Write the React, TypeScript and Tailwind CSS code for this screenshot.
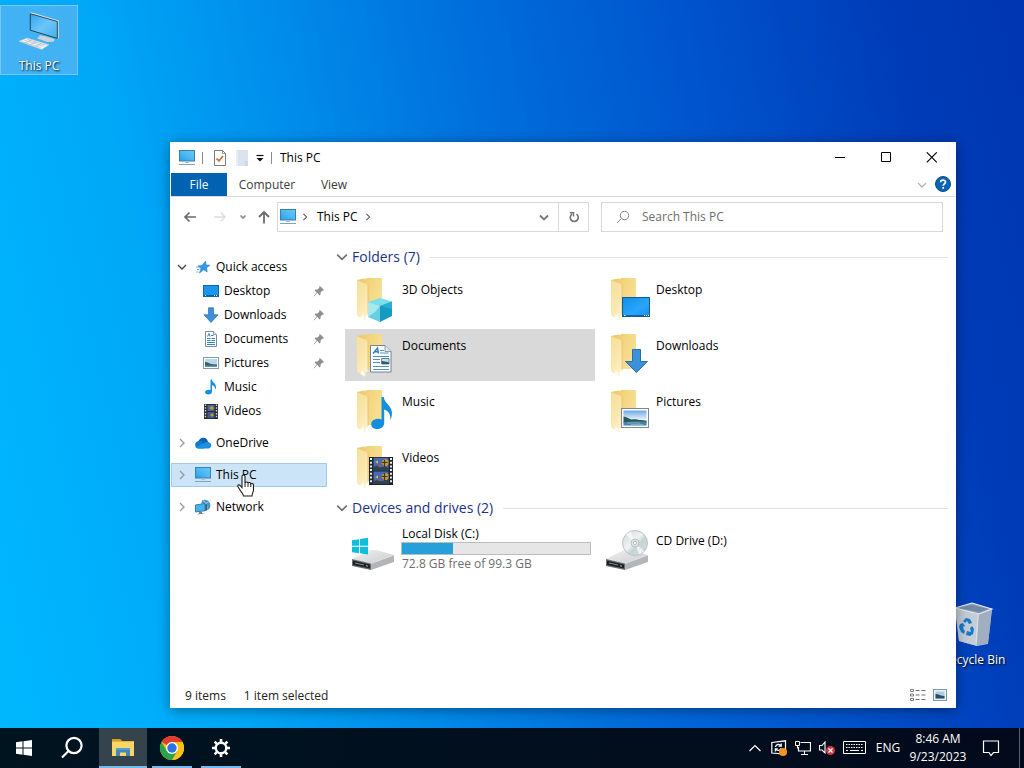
import React from "react";

type IconProps = { className?: string };

/* ---------- small icons ---------- */

function PcIcon({ className = "w-[18px] h-[18px]" }: IconProps) {
  return (
    <svg viewBox="0 0 18 18" className={className} aria-hidden="true">
      <defs>
        <linearGradient id="pcg" x1="0" y1="1" x2="1" y2="0">
          <stop offset="0" stopColor="#2a9de4" />
          <stop offset="0.5" stopColor="#4db8f2" />
          <stop offset="1" stopColor="#6cc9f8" />
        </linearGradient>
      </defs>
      <rect x="1.5" y="1.5" width="15" height="10.5" fill="url(#pcg)" stroke="#3c7fae" />
      <path d="M7 12.5h4V14H7z" fill="#a8c4d6" />
      <path d="M1 15.500h16" stroke="#7fa3b8" />
    </svg>
  );
}

function Chevron({ dir, className = "w-[10px] h-[10px]" }: IconProps & { dir: "down" | "right" | "up" }) {
  const d = dir === "down" ? "M1 3l4 4 4-4" : dir === "up" ? "M1 7l4-4 4 4" : "M3 1l4 4-4 4";
  return (
    <svg viewBox="0 0 10 10" className={className} fill="none" stroke="currentColor" aria-hidden="true">
      <path d={d} strokeWidth="1.3" />
    </svg>
  );
}

function PinIcon() {
  return (
    <svg viewBox="0 0 12 12" className="h-3 w-3" aria-hidden="true">
      <path d="M7 1l4 4-.8.8-.8-.2L7.6 7.400l-.1 2.100-.9.900L4.300 8.100.900 11.400l-.3-.3L3.900 7.700 1.600 5.400l.9-.9 2.100-.1L6.400 2.600 6.200 1.800z" fill="#8c9094" />
    </svg>
  );
}

function StarIcon() {
  return (
    <svg viewBox="0 0 16 16" className="h-4 w-4" aria-hidden="true">
      <path d="M10.500 2l.6 4 3.900.3-3.400 2.400.6 4.300-3.500-2.300L4.500 14l1.500-4.600L3 6.900l4-.4z" fill="#2f9be6" stroke="#2b82c4" strokeWidth=".6" />
      <path d="M1 8h3M2 10.500h2.500M1.500 13h2" stroke="#4aa7e4" strokeWidth=".9" />
    </svg>
  );
}

function DesktopSmall() {
  return (
    <svg viewBox="0 0 16 16" className="h-4 w-4" aria-hidden="true">
      <rect x=".5" y="2.500" width="15" height="11" fill="#1a96ee" stroke="#1568a8" />
      <path d="M1 12.500h14" stroke="#0e62a8" />
      <path d="M2 12.500h1M11 12.500h1M13 12.500h1" stroke="#d9efff" />
    </svg>
  );
}

function DownloadSmall() {
  return (
    <svg viewBox="0 0 16 16" className="h-4 w-4" aria-hidden="true">
      <path d="M5.500.8h5v7H15L8 15.500 1 7.800h4.500z" fill="#3c8fdb" stroke="#2b6dab" strokeWidth=".7" />
    </svg>
  );
}

function DocumentSmall() {
  return (
    <svg viewBox="0 0 16 16" className="h-4 w-4" aria-hidden="true">
      <path d="M2.500.5h8l3 3v12h-11z" fill="#fff" stroke="#7e8a94" />
      <path d="M10.500.5v3h3" fill="#e5eaee" stroke="#7e8a94" strokeWidth=".8" />
      <path d="M4.500 5.500L6 2.500l1 3M8 4.500h2.500M4 7.500h3.500M8.500 7.500H12M4 9.500h3.500M8.500 9.500H12M4 11.500h8M4 13.500h8" fill="none" stroke="#2f86c6" />
    </svg>
  );
}

function PictureSmall() {
  return (
    <svg viewBox="0 0 16 16" className="h-4 w-4" aria-hidden="true">
      <rect x=".5" y="2.500" width="15" height="11" fill="#fff" stroke="#8a99a5" />
      <rect x="2" y="4" width="12" height="8" fill="#b5d8ec" />
      <path d="M2 7c3 0 4 1.500 6 2 2 .2 4 .3 6 .5V12H2z" fill="#3c5d70" />
      <path d="M2 10.500h12V12H2z" fill="#5d93b5" />
    </svg>
  );
}

function MusicSmall() {
  return (
    <svg viewBox="0 0 16 16" className="h-4 w-4" aria-hidden="true">
      <path d="M7.500.5h1.400c.4 3 4.100 3.700 4.100 7.500 0 1-.3 2-.8 2.800.2-3-1.300-4-3.200-4.800v6.500c0 1.800-1.500 3-3.500 3S2 14.600 2 13.300s1.500-2.500 3.500-2.500c.8 0 1.500.1 2 .4z" fill="#168fdf" />
    </svg>
  );
}

function VideoSmall() {
  return (
    <svg viewBox="0 0 16 16" className="h-4 w-4" aria-hidden="true">
      <rect x="1" y="1" width="14" height="15" fill="#262a31" />
      <path d="M2.500 1.500v14M13.500 1.500v14" stroke="#d5dade" strokeWidth="1.400" strokeDasharray="1.500 1.300" />
      <path d="M4.500 2h7v6h-7z" fill="#4d63a6" />
      <path d="M4.500 9h7v6h-7z" fill="#40578f" />
      <path d="M6 5l3-2 2 2-2 2zM7 12l2-2 2 2-2 2z" fill="#c09b2b" />
    </svg>
  );
}

function OneDriveIcon() {
  return (
    <svg viewBox="0 0 18 16" className="h-4 w-[18px]" aria-hidden="true">
      <path d="M4.500 6A5 5 0 0 1 13 4.500l2 4L8 13H4.500z" fill="#0f62b4" />
      <path d="M4.500 6a4 4 0 0 1 4 1L13 10l-3 3.500H4.300A3.800 3.800 0 0 1 4.500 6z" fill="#1178cc" />
      <path d="M12.500 7c2.800-.5 4.800 1.100 4.800 3.300 0 1.900-1.300 3.200-3.200 3.200H4.200C2.800 13.500 2 13 1.500 12.300z" fill="#1b8fe0" />
    </svg>
  );
}

function NetworkIcon() {
  return (
    <svg viewBox="0 0 18 16" className="h-4 w-[18px]" aria-hidden="true">
      <path d="M8 1.500c3-1.500 6-.5 7.500 2s1 5.500-1 7L11 12 7 6z" fill="#4c93bd" />
      <path d="M9 1.500c2.500 1 4 4 4.200 8M8 5c3 0 5-1 7-2.500" stroke="#a4d9f2" strokeWidth=".8" fill="none" />
      <path d="M1.500 6l9.500-1.500v7.200L1.500 13z" fill="#45b4f0" stroke="#397da7" />
      <path d="M5 13l3-.4v1.400l2 .8-7 .7 2-1.200z" fill="#72899a" />
      <path d="M11.500 4.500l1.500 1v5.700l-1.500.6z" fill="#28618c" />
    </svg>
  );
}

/* ---------- folder icons ---------- */

function FolderIcon({ children }: { children: React.ReactNode }) {
  return (
    <svg viewBox="0 0 48 48" className="h-12 w-12 shrink-0" aria-hidden="true">
      <defs>
        <linearGradient id="fback" x1="0" y1="0" x2="1" y2="0.4">
          <stop offset="0" stopColor="#e9c469" />
          <stop offset="0.5" stopColor="#f3d57f" />
          <stop offset="1" stopColor="#f8df94" />
        </linearGradient>
        <linearGradient id="ffront" x1="0" y1="0" x2="0.4" y2="1">
          <stop offset="0" stopColor="#f7df98" />
          <stop offset="0.7" stopColor="#fae8ae" />
          <stop offset="1" stopColor="#fcf0cd" />
        </linearGradient>
      </defs>
      <path d="M6 5l7-1.500 2 .5 1-1h15v35H14L6 40z" fill="url(#fback)" />
      <path d="M6 5l11 5v30l-2.500 1.500V46L6 40.500z" fill="url(#ffront)" />
      <path d="M17 10v29" stroke="#e4c26a" strokeWidth=".8" />
      <path d="M11 40l1.500 1 .5 4.300-3.500-2.500z" fill="#fff" />
      {children}
    </svg>
  );
}

const Cube = (
  <g>
    <path d="M17 27l12-4 12 3.500-12 4.500z" fill="#79dfee" />
    <path d="M17 27l12 4v16l-12-5z" fill="#67cfe3" />
    <path d="M17 27l12 4-5 6-7 5z" fill="#a9e9ec" />
    <path d="M29 31l12-4.500V41l-12 6z" fill="#159bc0" />
    <path d="M29 31l12-4.500V34z" fill="#27afd0" />
  </g>
);

const DesktopBadge = (
  <g>
    <defs>
      <linearGradient id="dskb" x1="0" y1="0" x2="1" y2="1">
        <stop offset="0" stopColor="#0f8fe9" />
        <stop offset="0.6" stopColor="#2aa5fa" />
        <stop offset="1" stopColor="#1490ed" />
      </linearGradient>
    </defs>
    <rect x="17.500" y="22.500" width="27" height="19" fill="url(#dskb)" stroke="#165b91" />
    <path d="M18 40.500h26" stroke="#0d66b5" />
    <path d="M19 40.500h1.500M39 40.500h1M41 40.500h1M43 40.500h1" stroke="#e5f5ff" />
  </g>
);

const DocumentBadge = (
  <g>
    <path d="M19.500 14.500h14.500l6 6v20.500H19.500z" fill="#fff" stroke="#77838e" />
    <path d="M34 14.500v6h6" fill="#e3e8ec" stroke="#77838e" strokeWidth=".8" />
    <path d="M22 22.500l4.500-5.500 1 5.500M23.500 20.800h4" stroke="#2a7dbe" strokeWidth="1.400" fill="none" />
    <path d="M29 19.500h4M29 22h8.500M22 25.500h16M22 28.500h7M22 31.500h7M22 35.500h16M22 38.500h16" stroke="#4d8fc3" />
    <path d="M30.500 27.500H38V33h-7.500z" fill="#c4dfef" stroke="#49677a" strokeWidth=".8" />
    <path d="M31 30l3 .5 4 1v1.500h-7z" fill="#34566a" />
  </g>
);

const DownloadBadge = (
  <path d="M27.500 18.500h8v12h7L31.500 41.500 20.500 30.500h7z" fill="#3b91dc" stroke="#2d6da6" />
);

const MusicBadge = (
  <path d="M30.500 10h2.200c.3 6 8.300 8.500 8.300 16 0 2.800-.6 5-1.800 7.300.8-6.300-1.700-9-6-10.800v13.200c0 3.800-2.900 6.300-7 6.300-3.500 0-6-1.900-6-4.800 0-3.200 3-5.500 7-5.500 1.300 0 2.400.3 3.300.8z" fill="#158fdd" />
);

const PictureBadge = (
  <g>
    <defs>
      <linearGradient id="sky" x1="0" y1="0" x2="0" y2="1">
        <stop offset="0" stopColor="#6fa8e4" />
        <stop offset="0.6" stopColor="#e4f2f8" />
      </linearGradient>
    </defs>
    <rect x="16.500" y="21.500" width="27" height="19" fill="#fff" stroke="#7b8791" />
    <rect x="18.500" y="23.500" width="23" height="15" fill="url(#sky)" />
    <path d="M18.500 29.500c3 .5 5 2 8 3 4-.5 6 .2 8 .5 3 .2 5 .2 7 .7V36h-23z" fill="#2a5a56" />
    <path d="M18.500 35c6-.5 15-1 23-.2v3.700h-23z" fill="#4585ab" />
    <path d="M22 36h13M26 37.500h12" stroke="#90bfce" strokeWidth=".7" />
  </g>
);

const VideoBadge = (
  <g>
    <rect x="18" y="14" width="24" height="28" fill="#20242b" />
    <path d="M20 15v26M40 15v26" stroke="#e9edef" strokeWidth="2" strokeDasharray="2 1.700" />
    <path d="M22.500 14.800h15v12.500h-15zM22.500 28.500h15V41h-15z" fill="#4569b8" />
    <path d="M22.500 24l4-1.500 3 2 5-1 3 1.500v2.300h-15zM22.500 38l4-1 4 1.500 7-2V41h-15z" fill="#2d4350" />
    <path d="M30 20l1.500-2.500 3-1.500 3 1.500v4l-2 1.500h-2.500zM30 34l1.500-2.500 3-1.500 3 1.500v4l-2 1.500h-2.500z" fill="#c99e28" />
    <path d="M33.500 17v7M33.500 30v8M30.500 19.500h6M30.500 33.500h6" stroke="#43331f" strokeWidth="1.200" />
    <path d="M24 19l3-1.500v3zM24 34l3-1.500v3z" fill="#e5bc38" />
    <path d="M27 23h3M27 37h3" stroke="#c74b35" strokeWidth="1.500" />
  </g>
);

function DriveBody() {
  return (
    <g>
      <defs>
        <linearGradient id="dtop" x1="0" y1="0" x2="1" y2="1">
          <stop offset="0" stopColor="#efefef" />
          <stop offset="1" stopColor="#cbcdce" />
        </linearGradient>
      </defs>
      <path d="M1 33l18-9h6l18 5-22 9z" fill="url(#dtop)" />
      <path d="M1 33l19 4.500v6.500L1 40z" fill="#6b6f72" />
      <path d="M2 34.500l17 4v4l-17-3.500z" fill="#1e2123" />
      <path d="M20 37.500L43 29v7l-23 8z" fill="#b3b6b8" />
      <path d="M20 37.500L43 29" stroke="#e4e6e7" strokeWidth=".8" />
      <path d="M4 37l9 2" stroke="#858b8f" />
      <path d="M15 39.700l2 .5" stroke="#a5c7a5" />
    </g>
  );
}

function LocalDiskIcon() {
  return (
    <svg viewBox="0 0 48 48" className="h-12 w-12 shrink-0" aria-hidden="true">
      <DriveBody />
      <path d="M1 14.200l7-1v6.500H1zM9 13l8-1.200v7.900H9zM1 20.700h7v6.500l-7-1zM9 20.700h8v7.800l-8-1.200z" fill="#10bddd" />
    </svg>
  );
}

function CdDriveIcon() {
  return (
    <svg viewBox="0 0 48 48" className="h-12 w-12 shrink-0" aria-hidden="true">
      <defs>
        <linearGradient id="disc" x1="0" y1="0" x2="1" y2="1">
          <stop offset="0" stopColor="#d2d6d7" />
          <stop offset="0.45" stopColor="#f0f3f3" />
          <stop offset="0.6" stopColor="#c4d4d4" />
          <stop offset="1" stopColor="#dadddd" />
        </linearGradient>
      </defs>
      <DriveBody />
      <circle cx="30" cy="17" r="12.500" fill="url(#disc)" stroke="#bcc2c4" />
      <path d="M30 17L21 8.500a12 12 0 0 1 5-3zM30 17l9 8a12 12 0 0 1-5 3.500z" fill="#fff" opacity=".65" />
      <circle cx="30" cy="17" r="4" fill="#dfe4e5" stroke="#b4babc" strokeWidth=".8" />
      <circle cx="30" cy="17" r="1.700" fill="#fff" stroke="#a7afb3" strokeWidth=".7" />
    </svg>
  );
}

/* ---------- desktop icons ---------- */

function DesktopPcIcon() {
  return (
    <svg viewBox="0 0 48 48" className="h-12 w-12" aria-hidden="true">
      <defs>
        <linearGradient id="scr" x1="0" y1="0" x2="1" y2="1">
          <stop offset="0" stopColor="#2fa5ee" />
          <stop offset="0.5" stopColor="#6cc6fa" />
          <stop offset="1" stopColor="#41aef0" />
        </linearGradient>
      </defs>
      <path d="M14 3.500l1.500-1L45.500 11.500V31l-1.500.5z" fill="#dde5e9" />
      <path d="M14.500 4l29.500 8.500v18.500L14.500 22z" fill="url(#scr)" stroke="#24384a" strokeWidth="1" />
      <path d="M25 27.500l7 1.500 9 3-1 2.500-7 .5-11-4z" fill="#c9d3d8" />
      <path d="M2 34l9-3.500L35 38l-8 5z" fill="#f2f5f6" stroke="#b6c2c9" strokeWidth=".6" />
      <path d="M5 34.500l21 6.500M8 33l21 6.500M11 32l21 6.500M9 36l7-3.500M14 38l7-3.500M20 40l7-3.500" stroke="#a9b5bb" strokeWidth=".7" />
    </svg>
  );
}

function RecycleBinIcon() {
  return (
    <svg viewBox="0 0 48 48" className="h-12 w-12" aria-hidden="true">
      <path d="M5 9l17-5 20 6-4 35-11 2L9 42z" fill="#b8c3d0" opacity=".9" />
      <path d="M5 9l24 6-2 32L9 42z" fill="#c3ccd7" />
      <path d="M29 15l13-5-4 34-11 3z" fill="#a0aebf" />
      <path d="M5 9l17-5 20 6-13 5z" fill="#8d9db2" stroke="#e4edf5" strokeWidth="1.100" />
      <path d="M9 9l13-3 16 4-9 3z" fill="#7189a6" />
      <path d="M28 16l-2 28" stroke="#e8edf2" strokeWidth=".7" />
      <path d="M13 22l3-3 4 1 2 4-3 1-2-3-2 2zM10 25l3-1 2 3-2 1 1 3 1 1-1 3-3-2-2-5zM17 32l4 1-1-4 2-2 2 3-1 5-3 2-4-1z" fill="#137ccb" />
    </svg>
  );
}

function HandCursor() {
  return (
    <svg viewBox="0 0 18 24" className="pointer-events-none absolute left-[66px] top-[11px] z-10 h-6 w-[18px]" aria-hidden="true">
      <path d="M5 2.500C5 .5 8 .5 8 2.500V9c.5-1.500 3-1.300 3 .3.700-1.300 2.800-1 2.800.7.900-1 2.700-.5 2.700 1.200V16c0 2-1.500 3-1.500 6H6.500c0-2-2-3.500-3.500-6l-2-3.300c-.8-1.500 1-2.400 2-1.400L5 13.500z" fill="#fff" stroke="#1a1a1a" strokeWidth="1.100" />
      <path d="M8 9v4M11 9.500V13M13.800 10.500V13" stroke="#1a1a1a" />
    </svg>
  );
}

/* ---------- data ---------- */

const quickAccess = [
  { label: "Desktop", icon: <DesktopSmall />, pinned: true },
  { label: "Downloads", icon: <DownloadSmall />, pinned: true },
  { label: "Documents", icon: <DocumentSmall />, pinned: true },
  { label: "Pictures", icon: <PictureSmall />, pinned: true },
  { label: "Music", icon: <MusicSmall />, pinned: false },
  { label: "Videos", icon: <VideoSmall />, pinned: false },
];

const folders = [
  { label: "3D Objects", badge: Cube },
  { label: "Desktop", badge: DesktopBadge },
  { label: "Documents", badge: DocumentBadge, selected: true },
  { label: "Downloads", badge: DownloadBadge },
  { label: "Music", badge: MusicBadge },
  { label: "Pictures", badge: PictureBadge },
  { label: "Videos", badge: VideoBadge },
];

/* ---------- explorer window ---------- */

function TitleBar() {
  return (
    <header className="flex h-[30px] items-center pl-[7px]">
      <PcIcon />
      <span className="ml-1.5 h-3 w-px bg-[#8a8a8a]" />
      <button aria-label="Properties" className="ml-2.5">
        <svg viewBox="0 0 14 16" className="h-4 w-3.5">
          <path d="M1.500.500h8l3 3v12h-11z" fill="#fff" stroke="#7b7b7b" />
          <path d="M9.500.5v3h3" fill="none" stroke="#7b7b7b" strokeWidth=".8" />
          <path d="M3.500 8.500l2.500 2.500 4-5" fill="none" stroke="#c8764c" strokeWidth="1.800" />
        </svg>
      </button>
      <button aria-label="New folder" className="ml-2">
        <svg viewBox="0 0 14 16" className="h-4 w-3.5">
          <path d="M1 0h12v16H1z" fill="#dbe3f1" />
          <path d="M1 0h2v16H1z" fill="#e8edf6" />
          <path d="M10 11h3v5h-3z" fill="#ccd7ea" />
        </svg>
      </button>
      <button aria-label="Customize toolbar" className="ml-1.5">
        <svg viewBox="0 0 10 10" className="h-2.5 w-2.5">
          <path d="M1.500 2.500h7" stroke="#111" strokeWidth="1.200" />
          <path d="M1.500 5h7L5 8.500z" fill="#111" />
        </svg>
      </button>
      <span className="ml-1.5 h-3 w-px bg-[#8a8a8a]" />
      <h1 className="ml-2 flex-1">This PC</h1>
      <button aria-label="Minimize" className="flex h-full w-[46px] items-center justify-center">
        <svg viewBox="0 0 12 12" className="h-3 w-3"><path d="M1 5.500h10" stroke="#000" /></svg>
      </button>
      <button aria-label="Maximize" className="flex h-full w-[46px] items-center justify-center">
        <svg viewBox="0 0 12 12" className="h-3 w-3"><path d="M1.500.500h9v9h-9z" fill="none" stroke="#000" /></svg>
      </button>
      <button aria-label="Close" className="flex h-full w-[46px] items-center justify-center">
        <svg viewBox="0 0 12 12" className="h-3 w-3"><path d="M.8.300l10 10M10.800.300l-10 10" stroke="#000" strokeWidth="1.100" /></svg>
      </button>
    </header>
  );
}

function RibbonTabs() {
  return (
    <nav className="flex h-6 items-stretch border-b border-[#dadbdc] text-[#3b3b3b]">
      <button className="w-14 bg-[#0063b1] text-white">File</button>
      <button className="w-20">Computer</button>
      <button className="w-[54px]">View</button>
      <button aria-label="Expand the ribbon" className="ml-auto text-[#b0b4b8]"><Chevron dir="down" /></button>
      <button aria-label="Help" className="ml-2 mr-1 flex items-start pt-[3px]">
        <svg viewBox="0 0 16 16" className="h-4 w-4">
          <circle cx="8" cy="8" r="7.500" fill="#0c64b4" stroke="#0a4e91" />
          <path d="M5.600 6.200C5.600 3.500 10.500 3.500 10.500 6c0 1.700-2.300 1.900-2.300 3.700M8.200 11v1.700" stroke="#fff" strokeWidth="1.700" fill="none" />
        </svg>
      </button>
    </nav>
  );
}

function AddressBar() {
  return (
    <div className="flex h-10 items-center pr-3 text-[#5c5c5c]">
      <button aria-label="Back" className="flex w-[38px] justify-center">
        <svg viewBox="0 0 14 14" className="h-3.5 w-3.5" fill="none" stroke="#6a6a6a" strokeWidth="1.700"><path d="M13 7H2M6.500 2.500L2 7l4.500 4.500" /></svg>
      </button>
      <button aria-label="Forward" className="flex w-[22px] justify-center">
        <svg viewBox="0 0 14 14" className="h-3.5 w-3.5" fill="none" stroke="#dcdcdc" strokeWidth="1.400"><path d="M1 7h11M7.500 2.500L12 7l-4.500 4.500" /></svg>
      </button>
      <button aria-label="Recent locations" className="flex w-6 justify-center">
        <svg viewBox="0 0 8 8" className="h-2 w-2" fill="none" stroke="#8a8a8a" strokeWidth="1.700"><path d="M1.500 2.500L4 5l2.500-2.500" /></svg>
      </button>
      <button aria-label="Up" className="mr-1 flex w-[18px] justify-center">
        <svg viewBox="0 0 14 14" className="h-3.5 w-3.5" fill="none" stroke="#6a6a6a" strokeWidth="1.800"><path d="M7 13.500V2M2 7l5-5 5 5" /></svg>
      </button>
      <div className="flex h-[30px] flex-1 items-center border border-[#d9d9d9] pl-px">
        <PcIcon />
        <span className="ml-1 text-[#555]"><Chevron dir="right" className="h-2 w-2" /></span>
        <button className="ml-2 text-black">This PC</button>
        <span className="ml-1.5 text-[#555]"><Chevron dir="right" className="h-2 w-2" /></span>
        <button aria-label="Previous locations" className="ml-auto mr-[9px]">
          <svg viewBox="0 0 10 10" className="h-2.5 w-2.5" fill="none" stroke="#777" strokeWidth="1.800"><path d="M1 3.500l4 4 4-4" /></svg>
        </button>
        <button aria-label="Refresh" className="flex h-full w-[30px] items-center justify-center border-l border-[#d9d9d9]">
          <svg viewBox="0 0 12 12" className="h-3 w-3" fill="none" stroke="#707070" strokeWidth="1.600">
            <path d="M8.500 3.200A4 4 0 1 1 4 3.200" />
            <path d="M1.800 1.800h3.700v3.700" strokeWidth="1.400" />
          </svg>
        </button>
      </div>
      <label className="ml-3 flex h-[30px] w-[342px] items-center border border-[#d9d9d9] pl-3.5">
        <svg viewBox="0 0 14 14" className="h-3.5 w-3.5" fill="none" stroke="#888" strokeWidth="1"><circle cx="8.500" cy="5.500" r="4.200" /><path d="M5.500 8.500L1 13" /></svg>
        <input aria-label="Search This PC" placeholder="Search This PC" className="ml-3 min-w-0 flex-1 bg-transparent outline-none placeholder:text-[#6d6d6d]" />
      </label>
    </div>
  );
}

function RootRow({ label, icon, open, selected, children }: { label: string; icon: React.ReactNode; open?: boolean; selected?: boolean; children?: React.ReactNode }) {
  return (
    <div className={selected ? "relative flex h-6 items-center bg-[#cce4f7] outline outline-1 -outline-offset-1 outline-[#a5cbe8]" : "relative flex h-6 items-center"}>
      <button aria-label={"Toggle " + label} className={open ? "ml-1.5 text-[#404040]" : "ml-1.5 text-[#999]"}>
        <Chevron dir={open ? "down" : "right"} />
      </button>
      <button className="ml-[7px] flex items-center gap-1">
        <span className="flex w-[18px] justify-center">{icon}</span>
        {label}
      </button>
      {children}
    </div>
  );
}

function Sidebar() {
  return (
    <aside className="flex w-[156px] shrink-0 flex-col gap-2 pt-[18px]">
      <div>
        <RootRow label="Quick access" icon={<StarIcon />} open />
        <ul>
          {quickAccess.map((item) => (
            <li key={item.label} className="flex h-6 items-center pl-8 pr-0.5">
              <button className="flex flex-1 items-center gap-[5px]">
                {item.icon}
                {item.label}
              </button>
              {item.pinned && <PinIcon />}
            </li>
          ))}
        </ul>
      </div>
      <RootRow label="OneDrive" icon={<OneDriveIcon />} />
      <RootRow label="This PC" icon={<PcIcon />} selected>
        <HandCursor />
      </RootRow>
      <RootRow label="Network" icon={<NetworkIcon />} />
    </aside>
  );
}

function GroupHeading({ label }: { label: string }) {
  return (
    <h2 className="mb-1 flex h-6 items-center text-[14px] leading-6 text-[#1e3287]">
      <span className="mr-1 text-[#6d6d6d]"><Chevron dir="down" className="h-3 w-3" /></span>
      {label}
      <span className="ml-2.5 mt-px h-px flex-1 bg-[#e2e2e2]" />
    </h2>
  );
}

function Content() {
  return (
    <main className="min-w-0 flex-1 pl-[9px] pr-[7px] pt-2">
      <section>
        <GroupHeading label="Folders (7)" />
        <ul className="ml-[9px] grid grid-cols-[repeat(auto-fill,250px)] gap-1">
          {folders.map((f) => (
            <li key={f.label}>
              <button className={f.selected ? "flex h-[52px] w-full items-start gap-[3px] bg-[#d9d9d9] pl-1.5 pt-0.5" : "flex h-[52px] w-full items-start gap-[3px] pl-1.5 pt-0.5"}>
                <FolderIcon>{f.badge}</FolderIcon>
                <span className="mt-[7px]">{f.label}</span>
              </button>
            </li>
          ))}
        </ul>
      </section>
      <section className="mt-[3px]">
        <GroupHeading label="Devices and drives (2)" />
        <ul className="ml-[9px] grid grid-cols-[repeat(auto-fill,250px)] gap-1">
          <li>
            <button className="flex h-[52px] w-full items-start gap-0.5 pl-1.5 pr-1 pt-0.5 text-left">
              <LocalDiskIcon />
              <span className="flex-1">
                <span className="block pl-px">Local Disk (C:)</span>
                <span className="mb-px block h-[13px] border border-[#bcbcbc] bg-[#e6e6e6]">
                  <span className="block h-full w-[27%] bg-[#26a0da]" />
                </span>
                <span className="block pl-px text-[#6d6d6d]">72.8 GB free of 99.3 GB</span>
              </span>
            </button>
          </li>
          <li>
            <button className="flex h-[52px] w-full items-start gap-[3px] pl-1.5 pt-0.5">
              <CdDriveIcon />
              <span className="mt-[7px]">CD Drive (D:)</span>
            </button>
          </li>
        </ul>
      </section>
    </main>
  );
}

function StatusBar() {
  return (
    <footer className="flex h-6 items-center gap-[18px] pl-3.5 pr-2 text-[#222]">
      <span className="pt-0.5">9 items</span>
      <span className="pt-0.5">1 item selected</span>
      <span className="ml-auto flex items-center gap-[7px]">
        <button aria-label="Details view">
          <svg viewBox="0 0 16 14" className="h-3.5 w-4" fill="none" stroke="#707070">
            <path d="M.5 1.500h3v2h-3zM.5 6h3v2h-3zM.5 10.500h3v2h-3z" strokeWidth=".9" />
            <path d="M5.500 2.500h4M11.500 2.500h4M5.500 7h4M11.500 7h4M5.500 11.500h4M11.500 11.500h4" />
          </svg>
        </button>
        <button aria-label="Large icons view">
          <svg viewBox="0 0 14 12" className="h-3 w-3.5">
            <rect x=".5" y=".5" width="13" height="11" fill="#e6f3fb" stroke="#7d96a8" />
            <rect x="2.500" y="2.500" width="9" height="7" fill="#a9cde3" />
            <path d="M2.500 5c3 0 5 2 9 2v2.500h-9z" fill="#2d4d60" />
          </svg>
        </button>
      </span>
    </footer>
  );
}

/* ---------- taskbar ---------- */

function Taskbar() {
  return (
    <footer className="flex h-10 items-center bg-linear-to-r from-[#001420] to-[#020a1c] text-white">
      <button aria-label="Start" className="flex h-full w-12 items-center justify-center">
        <svg viewBox="0 0 16 16" className="h-4 w-4" fill="#fff"><path d="M0 2.200l6.500-.9v6.200H0zM7.500 1.200L16 0v7.500H7.500zM0 8.500h6.500v6.200L0 13.800zM7.500 8.500H16V16l-8.500-1.200z" /></svg>
      </button>
      <button aria-label="Search" className="mr-[3px] flex h-full w-12 items-center justify-center">
        <svg viewBox="0 0 24 24" className="h-6 w-6" fill="none" stroke="#fff" strokeWidth="2.200"><circle cx="14" cy="9.500" r="7.600" /><path d="M8.500 15L2 21.500" /></svg>
      </button>
      <button aria-label="File Explorer" className="flex h-full w-12 items-center justify-center border-b-2 border-[#76b9ed] bg-[#34434c] pt-0.5">
        <svg viewBox="0 0 24 24" className="h-6 w-6">
          <path d="M1 3h8l2 2h12v15H1z" fill="#e8b13c" />
          <path d="M1 6h22v14H1z" fill="#fbd566" />
          <path d="M1 3h8l1.500 2H1z" fill="#d99b24" />
          <path d="M5 12h14v8h-4v-3.500H9V20H5z" fill="#3f88bd" />
          <path d="M5 12h14v2H5z" fill="#559fcd" />
        </svg>
      </button>
      <span className="ml-px flex h-full w-12 px-1">
        <button aria-label="Google Chrome" className="flex w-full items-center justify-center border-b-2 border-[#76b9ed] pt-0.5">
          <svg viewBox="0 0 24 24" className="h-6 w-6">
            <circle cx="12" cy="12" r="12" fill="#fbc116" />
            <path d="M12 12L1.600 6A12 12 0 0 1 22.400 6z" fill="#e33b2e" />
            <path d="M12 6h10.400A12 12 0 0 1 12 24l5.200-9z" fill="#fbc116" />
            <path d="M1.600 6A12 12 0 0 0 12 24l5.200-9L12 12 6.800 15z" fill="#2ba24c" />
            <circle cx="12" cy="12" r="6" fill="#fff" />
            <circle cx="12" cy="12" r="4.700" fill="#2f73e0" />
          </svg>
        </button>
      </span>
      <span className="ml-px flex h-full w-12 px-1">
        <button aria-label="Settings" className="flex w-full items-center justify-center border-b-2 border-[#76b9ed] pt-0.5">
          <svg viewBox="0 0 20 20" className="h-5 w-5" fill="none" stroke="#fff">
            <circle cx="10" cy="10" r="5.300" strokeWidth="2.400" />
            <path d="M10 1v3M10 16v3M1 10h3M16 10h3M3.600 3.600l2.200 2.200M14.200 14.200l2.200 2.200M16.400 3.600l-2.200 2.200M5.800 14.200l-2.200 2.200" strokeWidth="2.600" />
          </svg>
        </button>
      </span>

      <div className="ml-auto flex h-full items-center">
        <button aria-label="Show hidden icons" className="flex w-6 justify-center">
          <svg viewBox="0 0 12 8" className="h-2 w-3" fill="none" stroke="#fff" strokeWidth="1.200"><path d="M.500 7L6 1.500 11.500 7" /></svg>
        </button>
        <button aria-label="Updates" className="flex w-6 justify-center">
          <svg viewBox="0 0 16 16" className="h-4 w-4" fill="none" stroke="#fff">
            <path d="M.8 2.500L14.500.800v13.400L.8 13z" strokeWidth="1.200" />
            <path d="M4.500 7c.5-3 4-3.500 5.500-1.200M10.300 3.500v2.700H7.500M10 8c-.5 2.800-4 3.300-5.500 1M4.300 11.500V8.800h2.500" strokeWidth="1.200" />
            <circle cx="12" cy="12" r="4" fill="#f7941d" stroke="none" />
          </svg>
        </button>
        <button aria-label="Network status" className="flex w-6 justify-center">
          <svg viewBox="0 0 16 14" className="h-3.5 w-4" fill="none" stroke="#fff">
            <path d="M5.500 1.500h10v8.500H3.500V6" strokeWidth="1.200" />
            <path d="M.500.500h4v4h-4zM2.500 4.500v3M9.500 10v3M6 13.500h7" />
          </svg>
        </button>
        <button aria-label="Volume muted" className="flex w-6 justify-center">
          <svg viewBox="0 0 16 14" className="h-3.5 w-4" fill="none" stroke="#fff">
            <path d="M.5 4.500H3L6 1v11L3 9H.500z" strokeWidth="1.100" />
            <circle cx="11.500" cy="9.500" r="4.500" fill="#cf3540" stroke="none" />
            <path d="M9.500 7.500l4 4M13.500 7.500l-4 4" strokeWidth="1.200" />
          </svg>
        </button>
        <button aria-label="Touch keyboard" className="flex w-8 justify-center">
          <svg viewBox="0 0 24 14" className="h-3.5 w-6" fill="none" stroke="#fff">
            <path d="M.500.500h22v12H.500z" />
            <path d="M3 3.500h17M3 6.500h17" strokeDasharray="1.500 1" />
            <path d="M3 9.500h2M7 9.500h9M18 9.500h2" />
          </svg>
        </button>
        <button className="w-[34px]">ENG</button>
        <button className="w-[66px] text-center leading-[18px]">
          <time className="block">8:46 AM</time>
          <time className="block">9/23/2023</time>
        </button>
        <button aria-label="Notifications" className="flex w-10 justify-center">
          <svg viewBox="0 0 18 18" className="h-[18px] w-[18px]" fill="none" stroke="#fff" strokeWidth="1.200"><path d="M1.500 2h15v11.500h-5L9 16.500l-2-3H1.500z" /></svg>
        </button>
        <button aria-label="Show desktop" className="ml-2 h-full w-[5px] border-l border-[#5a6270]" />
      </div>
    </footer>
  );
}

export default function App() {
  return (
    <div className="flex h-screen min-h-[700px] flex-col overflow-hidden bg-[#0078d7] font-['Open_Sans','Noto_Sans',sans-serif] text-[12px] leading-4 text-black">
      <div className="relative flex-1 bg-[linear-gradient(78deg,#00b8fe_0%,#00a8f8_20%,#0090ec_34%,#006fdc_52%,#0052cc_72%,#003cb8_88%,#0036b0_100%)]">
        <button className="absolute left-0 top-[5px] flex h-[70px] w-[78px] flex-col items-center gap-1 border border-[#7cc4f5] bg-[#5cb5f2]/70 pt-1 text-white [text-shadow:1px_1px_2px_#000]">
          <DesktopPcIcon />
          This PC
        </button>
        <button className="absolute right-3 top-[599px] flex h-[70px] w-[76px] flex-col items-center gap-[5px] text-white [text-shadow:1px_1px_2px_#000]">
          <RecycleBinIcon />
          Recycle Bin
        </button>
        <div className="absolute bottom-5 left-[170px] right-[68px] top-[142px] flex flex-col border border-white bg-white shadow-[0_2px_12px_rgba(0,0,0,0.4)]">
          <TitleBar />
          <RibbonTabs />
          <AddressBar />
          <div className="flex min-h-0 flex-1">
            <Sidebar />
            <Content />
          </div>
          <StatusBar />
        </div>
      </div>
      <Taskbar />
    </div>
  );
}
